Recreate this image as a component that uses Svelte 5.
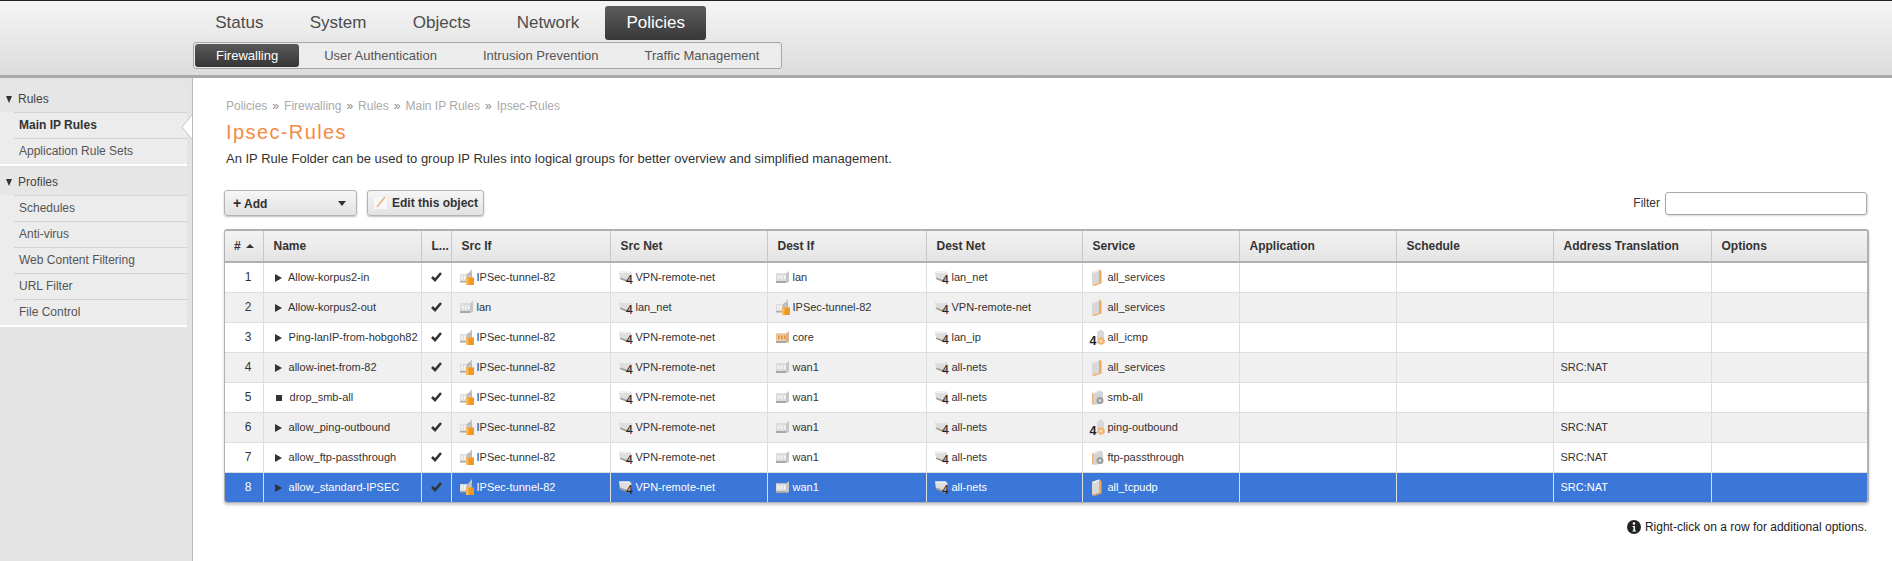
<script>
	const mainNav = ['Status', 'System', 'Objects', 'Network', 'Policies'];
	const subNav = ['Firewalling', 'User Authentication', 'Intrusion Prevention', 'Traffic Management'];
	const sideRules = ['Main IP Rules', 'Application Rule Sets'];
	const sideProfiles = ['Schedules', 'Anti-virus', 'Web Content Filtering', 'URL Filter', 'File Control'];
	const crumbs = ['Policies', 'Firewalling', 'Rules', 'Main IP Rules', 'Ipsec-Rules'];
	const columns = ['Name', 'L...', 'Src If', 'Src Net', 'Dest If', 'Dest Net', 'Service', 'Application', 'Schedule', 'Address Translation', 'Options'];

	const tunnel = 'IPSec-tunnel-82';
	const remote = 'VPN-remote-net';

	const rows = [
		{ name: 'Allow-korpus2-in', src: tunnel, srcNet: remote, dest: 'lan', destNet: 'lan_net', service: 'all_services', kind: 'doc', nat: '' },
		{ name: 'Allow-korpus2-out', src: 'lan', srcNet: 'lan_net', dest: tunnel, destNet: remote, service: 'all_services', kind: 'doc', nat: '' },
		{ name: 'Ping-lanIP-from-hobgoh82', src: tunnel, srcNet: remote, dest: 'core', destNet: 'lan_ip', service: 'all_icmp', kind: 'icmp', nat: '' },
		{ name: 'allow-inet-from-82', src: tunnel, srcNet: remote, dest: 'wan1', destNet: 'all-nets', service: 'all_services', kind: 'doc', nat: 'SRC:NAT' },
		{ name: 'drop_smb-all', src: tunnel, srcNet: remote, dest: 'wan1', destNet: 'all-nets', service: 'smb-all', kind: 'svc', nat: '', drop: true },
		{ name: 'allow_ping-outbound', src: tunnel, srcNet: remote, dest: 'wan1', destNet: 'all-nets', service: 'ping-outbound', kind: 'icmp', nat: 'SRC:NAT' },
		{ name: 'allow_ftp-passthrough', src: tunnel, srcNet: remote, dest: 'wan1', destNet: 'all-nets', service: 'ftp-passthrough', kind: 'svc', nat: 'SRC:NAT' },
		{ name: 'allow_standard-IPSEC', src: tunnel, srcNet: remote, dest: 'wan1', destNet: 'all-nets', service: 'all_tcpudp', kind: 'doc', nat: 'SRC:NAT', selected: true }
	];
</script>

{#snippet nic(name)}
	<svg class="ico" viewBox="0 0 14 14" width="14" height="14">
		<path d="M0 3.500h10l3-2.500v11l-3 1H0z" fill={name === 'core' ? '#d3b38e' : '#c6c6c6'} />
		<path d="M0 3.500h10V11H0z" fill={name === 'core' ? '#e8c9a0' : '#dcdcdc'} />
		<path d="M2 5.500h1.500v3.500H2zM5 5.500h1.500v3.500H5zM8 5.500h1.500v3.500H8z" fill={name === 'core' ? '#ee8f24' : '#f7f7f7'} />
		<path d="M0 11h10v2H0z" fill="#a8a8a8" />
	</svg>
{/snippet}

{#snippet ipsec()}
	<svg class="ico" viewBox="0 0 14 16" width="14" height="16">
		<path d="M0 5h8l4-5v11H0z" fill="#c6c6c6" />
		<path d="M0 5h8v8H0z" fill="#dedede" />
		<path d="M1.500 6.500H3v4H1.500zM4 6.500h1.500v4H4z" fill="#f7f7f7" />
		<path d="M0 12h6v1.500H0z" fill="#a8a8a8" />
		<path d="M7.500 9V6.500a2 2 0 0 1 4 0V9" fill="none" stroke="#b5b5b5" stroke-width="1.300" />
		<path d="M6 8.500h8V16H6z" fill="#f0981f" />
		<path d="M6 8.500h2.500V16H6z" fill="#f6b85c" />
	</svg>
{/snippet}

{#snippet net()}
	<svg class="ico" viewBox="0 0 14 15" width="14" height="15">
		<path d="M0 1.500h11l1.500 2V9l-3 3.500L1 9z" fill="#dedede" />
		<path d="M0 1.500h11l-1 1.500H1.500z" fill="#f3f3f3" />
		<path d="M1 9l8.500 3.500 3-3.500-.5-1-3 2.500L1.500 7.500z" fill="#9a9a9a" />
		<text x="7" y="14" class="four">4</text>
	</svg>
{/snippet}

{#snippet service(kind)}
	<svg class="ico" viewBox="0 0 14 17" width="14" height="17">
		{#if kind === 'icmp'}
			<path d="M6 3l4-2.500 3 2.500v7H6z" fill="#d8d8d8" />
			<circle cx="10" cy="12" r="3.800" fill="#f3b878" />
			<circle cx="10" cy="12" r="1.300" fill="#fbe2c4" />
			<text x="-1.500" y="16" class="four bold">4</text>
		{:else if kind === 'svc'}
			<path d="M1 4l7-3 4 2v11l-8 2-3-1z" fill="#d4d4d4" />
			<path d="M1 4l7-3 1.500.8-7 3.200z" fill="#f1f1f1" />
			<path d="M1 4l1.500 1v10.500L1 15z" fill="#f0b070" />
			<circle cx="9" cy="11.500" r="3.500" fill="#9e9e9e" />
			<circle cx="9" cy="11.500" r="1.200" fill="#e6e6e6" />
		{:else}
			<path d="M1 3l7-2.500V14l-7 2z" fill="#d8d8d8" />
			<path d="M1 3l7-2.500 1.500 1-7 2.500z" fill="#f1f1f1" />
			<path d="M8 .5l2.500 1.500v12.500L8 14z" fill="#f0a85a" />
			<path d="M1 16l7-2 2.500.5L3 17z" fill="#f0a85a" />
		{/if}
	</svg>
{/snippet}

<div class="page">
	<header class="top">
		<nav class="main-nav">
			{#each mainNav as item}
				<span class="main-item" class:active={item === 'Policies'}>{item}</span>
			{/each}
		</nav>
		<nav class="sub-nav">
			{#each subNav as item}
				<span class="sub-item" class:active={item === 'Firewalling'}>{item}</span>
			{/each}
		</nav>
	</header>

	<div class="body">
		<aside class="side">
			<div class="side-group">
				<div class="side-title"><i class="tri"></i>Rules</div>
				{#each sideRules as item}
					<div class="side-item" class:current={item === 'Main IP Rules'}>{item}</div>
				{/each}
			</div>
			<div class="side-group">
				<div class="side-title"><i class="tri"></i>Profiles</div>
				{#each sideProfiles as item}
					<div class="side-item">{item}</div>
				{/each}
			</div>
			<svg class="pointer" width="11" height="24" viewBox="0 0 11 24">
				<path d="M11 0L1 12l10 12z" fill="#fff" />
				<path d="M11 0L1 12l10 12" fill="none" stroke="#c6c6c6" />
			</svg>
		</aside>

		<main class="content">
			<div class="crumbs">
				{#each crumbs as c, i}
					{#if i > 0}<span class="sep">»</span>{/if}<span>{c}</span>
				{/each}
			</div>
			<h1>Ipsec-Rules</h1>
			<p class="desc">An IP Rule Folder can be used to group IP Rules into logical groups for better overview and simplified management.</p>

			<div class="toolbar">
				<button class="btn add"><span><b>+</b> Add</span><i class="caret"></i></button>
				<button class="btn edit">
					<svg width="14" height="14" viewBox="0 0 14 14">
						<rect x="0" y="1" width="13" height="12" fill="#f8f8f8" />
						<path d="M3 11L11 1" stroke="#eab07a" stroke-width="1.500" />
					</svg>
					Edit this object
				</button>
				<label class="filter">Filter <input type="text" /></label>
			</div>

			<div class="table-wrap">
				<table>
					<colgroup>
						<col style="width: 38px" />
						<col style="width: 158px" />
						<col style="width: 30px" />
						<col style="width: 159px" />
						<col style="width: 157px" />
						<col style="width: 159px" />
						<col style="width: 156px" />
						<col style="width: 157px" />
						<col style="width: 157px" />
						<col style="width: 157px" />
						<col style="width: 158px" />
						<col />
					</colgroup>
					<thead>
						<tr>
							<th class="num">#<span class="sort"></span></th>
							{#each columns as col}
								<th>{col}</th>
							{/each}
						</tr>
					</thead>
					<tbody>
						{#each rows as row, i}
							<tr class:odd={i % 2 === 1} class:selected={row.selected}>
								<td class="num">{i + 1}</td>
								<td class="name">
									{#if row.drop}
										<span class="stop"></span>
									{:else}
										<span class="play"></span>
									{/if}
									{row.name}
								</td>
								<td class="check">
									<svg width="11" height="10" viewBox="0 0 11 10"><path d="M1 5l3 3 6-7" fill="none" stroke="#333" stroke-width="2.600" /></svg>
								</td>
								<td><span class="cell">{#if row.src === tunnel}{@render ipsec()}{:else}{@render nic(row.src)}{/if}{row.src}</span></td>
								<td><span class="cell">{@render net()}{row.srcNet}</span></td>
								<td><span class="cell">{#if row.dest === tunnel}{@render ipsec()}{:else}{@render nic(row.dest)}{/if}{row.dest}</span></td>
								<td><span class="cell">{@render net()}{row.destNet}</span></td>
								<td class="svc"><span class="cell">{@render service(row.kind)}{row.service}</span></td>
								<td></td>
								<td></td>
								<td class="nat">{row.nat}</td>
								<td></td>
							</tr>
						{/each}
					</tbody>
				</table>
			</div>

			<div class="hint">
				<svg width="14" height="14" viewBox="0 0 14 14">
					<circle cx="7" cy="7" r="7" fill="#222" />
					<circle cx="7" cy="3.500" r="1.300" fill="#fff" />
					<path d="M5.500 6h2.500v4.500h1v1H5.500v-1h1V7h-1z" fill="#fff" />
				</svg>
				Right-click on a row for additional options.
			</div>
		</main>
	</div>
</div>

<style>
	:global(body) {
		margin: 0;
		background: #fff;
	}

	.page {
		height: 561px;
		display: flex;
		flex-direction: column;
		font-family: 'Liberation Sans', Arial, sans-serif;
		font-size: 12px;
		color: #333;
		overflow: hidden;
	}

	.top {
		height: 74px;
		flex: none;
		border-top: 1px solid #1c2126;
		border-bottom: 3px solid #a9a9a9;
		background: linear-gradient(#f5f5f5, #dcdcdc);
		padding-left: 193px;
		box-sizing: content-box;
	}

	.main-nav {
		display: flex;
		height: 41px;
		padding-top: 5px;
		margin-left: -1px;
		box-sizing: border-box;
	}

	.main-item {
		height: 34px;
		line-height: 34px;
		font-size: 17px;
		padding: 0 23.200px;
		color: #4c4c4c;
		border-radius: 3px;
	}

	.main-item.active {
		color: #fff;
		background: linear-gradient(#5c5c5c, #383838);
		margin-left: 3px;
		padding: 0 21px;
	}

	.sub-nav {
		display: flex;
		width: 589px;
		height: 27px;
		box-sizing: border-box;
		border: 1px solid #a6a6a6;
		border-radius: 3px;
		padding: 1px;
		background: #ececec;
	}

	.sub-item {
		height: 23px;
		line-height: 23px;
		font-size: 13px;
		padding: 0 21px;
		margin-right: 4px;
		color: #555;
		border-radius: 3px;
		white-space: nowrap;
	}

	.sub-item.active {
		color: #fff;
		background: linear-gradient(#5a5a5a, #353535);
	}

	.body {
		flex: 1;
		display: flex;
		min-height: 0;
	}

	.side {
		position: relative;
		width: 193px;
		flex: none;
		box-sizing: border-box;
		background: #e4e4e4;
		border-right: 1px solid #b9b9b9;
		padding-top: 8px;
		padding-right: 5px;
	}

	.side-group {
		background: #ececec;
		border-bottom: 2px solid #fff;
		margin-bottom: 3px;
	}

	.side-title {
		height: 26px;
		line-height: 26px;
		padding-left: 6px;
		color: #444;
		background: #e6e6e6;
		display: flex;
		align-items: center;
	}

	.tri {
		border: 3.500px solid transparent;
		border-top: 7px solid #333;
		border-bottom: 0;
		margin-right: 6px;
	}

	.side-item {
		height: 26px;
		line-height: 25px;
		margin-left: 14px;
		padding-left: 5px;
		box-sizing: border-box;
		border-top: 1px solid #d4d4d4;
		color: #555;
	}

	.side-item.current {
		font-weight: bold;
		color: #333;
	}

	.pointer {
		position: absolute;
		right: 0;
		top: 37px;
	}

	.content {
		flex: 1;
		min-width: 0;
		padding: 21px 24px 0 31px;
	}

	.crumbs {
		height: 14px;
		line-height: 14px;
		padding-left: 2px;
		color: #aaa;
		display: flex;
		gap: 5px;
	}

	.sep {
		color: #888;
	}

	h1 {
		margin: 7px 0 0 2px;
		font-size: 20px;
		line-height: 24px;
		font-weight: normal;
		letter-spacing: 1.400px;
		color: #f58a42;
	}

	.desc {
		margin: 8px 0 0 2px;
		font-size: 13px;
		line-height: 14px;
		color: #333;
	}

	.toolbar {
		display: flex;
		align-items: center;
		gap: 10px;
		margin-top: 24px;
		height: 26px;
	}

	.btn {
		height: 26px;
		font: bold 12px 'Liberation Sans', Arial, sans-serif;
		color: #333;
		background: linear-gradient(#f6f6f6, #e2e2e2);
		border: 1px solid #b4b4b4;
		border-radius: 3px;
		box-shadow: 0 1px 2px rgba(0, 0, 0, 0.25);
		padding: 0 8px;
		display: flex;
		align-items: center;
	}

	.add {
		width: 133px;
		justify-content: space-between;
	}

	.add b {
		font-size: 14px;
	}

	.caret {
		border: 4px solid transparent;
		border-top: 5px solid #333;
		border-bottom: 0;
		margin-right: 2px;
	}

	.edit {
		width: 117px;
		gap: 4px;
		padding: 0 4px 0 6px;
		white-space: nowrap;
	}

	.filter {
		margin-left: auto;
		display: flex;
		align-items: center;
		gap: 5px;
		margin-right: 1px;
	}

	.filter input {
		width: 202px;
		height: 23px;
		box-sizing: border-box;
		border: 1px solid #a8a8a8;
		border-radius: 3px;
		box-shadow: 1px 1px 2px rgba(0, 0, 0, 0.15);
		padding: 0;
	}

	.table-wrap {
		margin-top: 13px;
		width: 1645px;
		border: 1px solid #b0b0b0;
		border-top-width: 2px;
		border-right-width: 2px;
		border-radius: 3px;
		box-shadow: 0 2px 3px rgba(0, 0, 0, 0.2);
		box-sizing: border-box;
		overflow: hidden;
	}

	table {
		width: 100%;
		table-layout: fixed;
		border-collapse: collapse;
	}

	th {
		height: 31px;
		padding: 0 0 0 10px;
		box-sizing: border-box;
		text-align: left;
		font-size: 12px;
		color: #333;
		background: linear-gradient(#f3f3f3, #e4e4e4);
		border-left: 1px solid #c8c8c8;
		border-bottom: 2px solid #b0b0b0;
		border-top-left-radius: 3px;
		white-space: nowrap;
		overflow: hidden;
	}

	th:first-child,
	td:first-child {
		border-left: 0;
	}

	th.num {
		padding-left: 9px;
	}

	.sort {
		display: inline-block;
		border: 4px solid transparent;
		border-bottom: 4px solid #333;
		border-top: 0;
		margin-left: 5px;
		vertical-align: 2px;
	}

	td {
		height: 30px;
		padding: 0 0 0 8px;
		box-sizing: border-box;
		border-left: 1px solid #dedede;
		border-top: 1px solid #dedede;
		color: #333;
		white-space: nowrap;
		overflow: hidden;
		font-size: 11px;
	}

	tbody tr:first-child td {
		border-top: 0;
	}

	tr.odd td {
		background: #f0f0f0;
	}

	tr.selected td {
		background: #3b76d9;
		color: #fff;
	}

	td.num {
		text-align: right;
		padding: 0 11px 0 0;
		font-size: 12px;
	}

	td.name {
		padding-left: 11px;
	}

	td.nat {
		padding-left: 7px;
	}

	td.svc {
		padding-left: 8px;
	}

	td.check {
		padding: 0 0 0 9px;
	}

	td.check svg {
		display: block;
	}

	.play {
		display: inline-block;
		border: 4px solid transparent;
		border-left: 7px solid #333;
		border-right: 0;
		margin-right: 4px;
		vertical-align: -1px;
	}

	.stop {
		display: inline-block;
		width: 6px;
		height: 6px;
		background: #333;
		margin-right: 5px;
		margin-left: 1px;
	}

	.cell {
		display: flex;
		align-items: center;
		gap: 3px;
	}

	.ico {
		flex: none;
		display: block;
		overflow: visible;
	}

	.four {
		font: 12.500px 'Liberation Sans', Arial, sans-serif;
		fill: #222;
	}

	.four.bold {
		font-weight: bold;
	}

	.hint {
		margin-top: 17px;
		margin-right: 1px;
		display: flex;
		justify-content: flex-end;
		align-items: center;
		gap: 4px;
		color: #222;
	}
</style>
